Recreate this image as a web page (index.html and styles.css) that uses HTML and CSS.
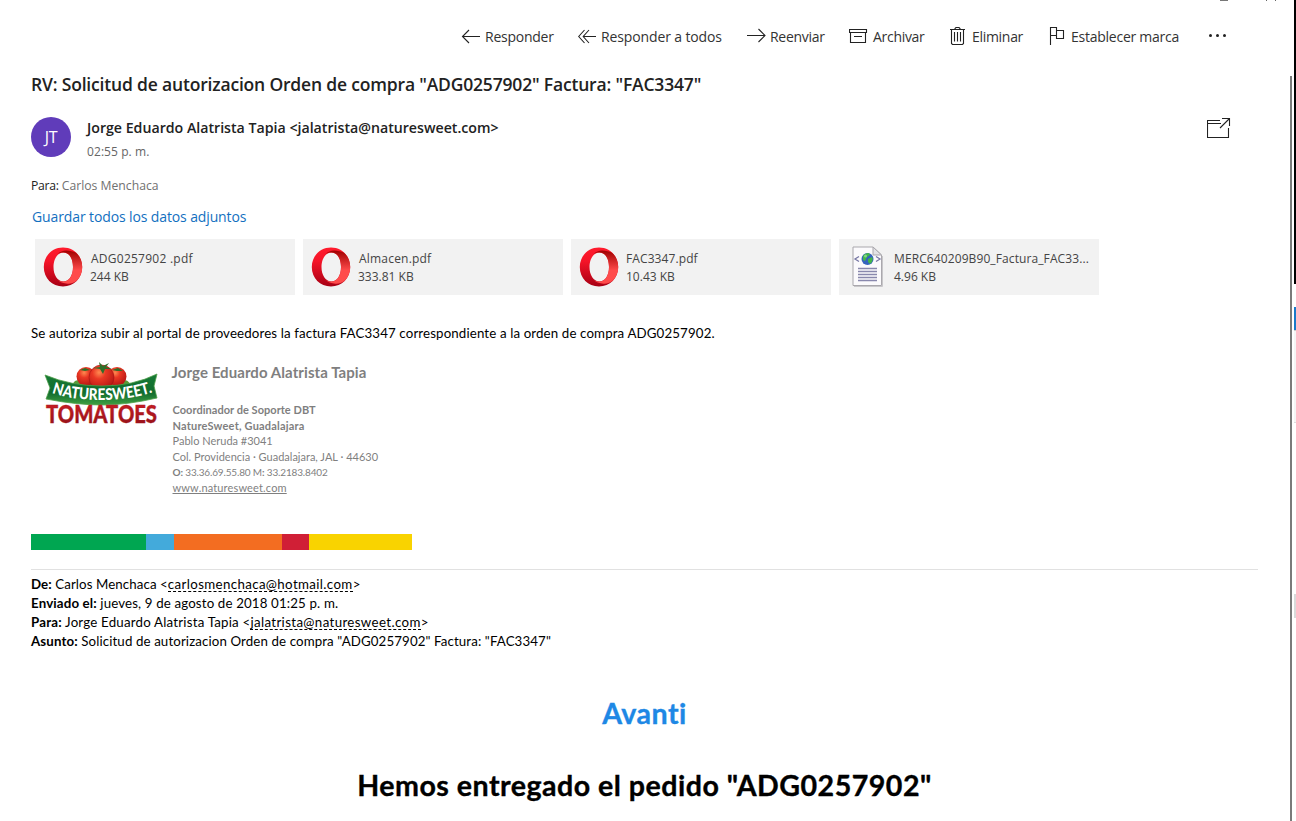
FILE: index.html
```html
<!DOCTYPE html>
<html lang="es">
<head>
<meta charset="utf-8">
<title>Correo</title>
<link rel="stylesheet" href="styles.css">
</head>
<body>
<svg class="defs" width="0" height="0">
  <defs>
    <linearGradient id="ringOuter" x1="0" y1="0" x2="0" y2="1"><stop offset="0" stop-color="#ff1b2d"/><stop offset=".35" stop-color="#f51428"/><stop offset="1" stop-color="#a70014"/></linearGradient>
    <linearGradient id="ringInner" x1="0" y1="0" x2="0" y2="1"><stop offset="0" stop-color="#a00000"/><stop offset=".6" stop-color="#ff4b4b"/><stop offset="1" stop-color="#ff4b4b"/></linearGradient>
    <symbol id="opera" viewBox="0 0 40 40">
      <path fill="url(#ringOuter)" fill-rule="evenodd" d="M20 .5C9 .5.8 9 .8 20S9 39.5 20 39.5 39.2 31 39.2 20 31 .5 20 .5ZM20.500 5.500C26.500 5.500 30 12 30 20s-3.500 14.500-9.500 14.500S10.500 28 10.500 20 14.500 5.500 20.500 5.500Z"/>
      <path fill="url(#ringInner)" d="M14 7.500C17 4.500 20 3.500 23 3.500c4 0 7 1 10 2.200 4 3.500 6.200 8.500 6.200 14.300s-2.200 10.800-6.200 14.300c-3 2.200-6 2.700-10 2.200-3.500-.5-6.500-1.500-9-4 2 1.500 4 2 6.500 2C26.500 34.500 30 28 30 20S26.500 5.500 20.500 5.500c-2.500 0-4.500.6-6.500 2Z"/>
    </symbol>
  </defs>
</svg>
<div class="app">
  <main class="mail">
    <div class="window-buttons"><i class="wb-a"></i><i class="wb-b"></i><i class="wb-b"></i></div>
    <nav class="toolbar">
      <a class="tool"><svg width="24" height="20" viewBox="0 0 24 20"><path d="M1.500 10.500H19M8 4 1.500 10.500 8 17"/></svg><span class="t-reply">Responder</span></a>
      <a class="tool"><svg width="23" height="20" viewBox="0 0 23 20"><path d="M6 10.500H18M6.500 4 .7 10.500 6.500 17M11 4 5.200 10.500 11 17"/></svg><span class="t-all">Responder a todos</span></a>
      <a class="tool"><svg width="23" height="20" viewBox="0 0 23 20"><path d="M0 9.500H18M11.500 3 18 9.500 11.500 16"/></svg><span class="t-fwd">Reenviar</span></a>
      <a class="tool"><svg width="24" height="20" viewBox="0 0 24 20"><path d="M.5 3.500H17.500V6.500H.5ZM1.500 6.500V16.500H16.500V6.500M5 10.500H13"/></svg><span class="t-arch">Archivar</span></a>
      <a class="tool"><svg width="22" height="20" viewBox="0 0 22 20"><path d="M0 3.500H15M5 3.500V2.500L6 1.500H9L10 2.500V3.500M1.500 3.500V17.500L2.500 18.500H12.500L13.500 17.500V3.500M4.500 6V15.500M7.500 6V15.500M10.500 6V15.500"/></svg><span class="t-del">Eliminar</span></a>
      <a class="tool"><svg width="22" height="20" viewBox="0 0 22 20"><path d="M1.500 19V1.500H7.500V9.500H1.500M7.500 4.500H14.500V12.500H7.500V9.500"/></svg><span class="t-flag">Establecer marca</span></a>
      <a class="tool"><svg width="20" height="20" viewBox="0 0 20 20"><g class="dots"><circle cx="2.500" cy="9.500" r="1.500"/><circle cx="9.500" cy="9.500" r="1.500"/><circle cx="16.500" cy="9.500" r="1.500"/></g></svg></a>
    </nav>
    <h1 class="subject"><span>RV: Solicitud de autorizacion Orden de compra "ADG0257902" Factura: "FAC3347"</span></h1>
    <header class="sender">
      <div class="avatar">JT</div>
      <div class="who">
        <div class="name">Jorge Eduardo Alatrista Tapia &lt;jalatrista@naturesweet.com&gt;</div>
        <div class="time">02:55 p. m.</div>
      </div>
      <svg class="popout" width="24" height="20" viewBox="0 0 24 20"><path d="M13 2.500H.5V19.500H21.500V10M.5 5.500H14M15 .5H22.500V8M13 10 22 1"/></svg>
    </header>
    <div class="to"><b>Para:</b> Carlos Menchaca</div>
    <a class="save-all">Guardar todos los datos adjuntos</a>
    <div class="files">
      <div class="file"><svg class="ring" width="40" height="40"><use href="#opera"/></svg><div class="meta"><div class="f1">ADG0257902 .pdf</div><div>244 KB</div></div></div>
      <div class="file"><svg class="ring" width="40" height="40"><use href="#opera"/></svg><div class="meta"><div class="f2">Almacen.pdf</div><div>333.81 KB</div></div></div>
      <div class="file"><svg class="ring" width="40" height="40"><use href="#opera"/></svg><div class="meta"><div class="f3">FAC3347.pdf</div><div>10.43 KB</div></div></div>
      <div class="file xml">
        <svg class="doc" width="32" height="42" viewBox="0 0 32 42">
          <path d="M1 1H21L29.500 9V39.500H1Z" fill="#fbfafc" stroke="#aaa8ad"/><path d="M2 40.500H30.500V10" fill="none" stroke="#c8c7ca"/>
          <path d="M21 1V9H29.500Z" fill="#e2e2e6" stroke="#aaa8ad"/>
          <circle cx="15.500" cy="13" r="6" fill="#3563bd"/><path d="M11 10Q13 7 17 7L18 9 15 11 13 15 11 14ZM16 13 20 11Q22 15 18 18L16 16Z" fill="#43b649"/><circle cx="13.500" cy="10" r="1.500" fill="#9de6a0" opacity=".7"/>
          <path d="M7 10.500 3 13 7 15.500M24 10.500 28 13 24 15.500" fill="none" stroke="#7777a4" stroke-width="1.300"/>
          <path d="M6 22.500H25M6 25.500H25M6 28.500H25M6 31.500H25M6 34.500H25" stroke="#8988ad" stroke-width="1.300"/>
        </svg>
        <div class="meta"><div class="f4">MERC640209B90_Factura_FAC33...</div><div>4.96 KB</div></div>
      </div>
    </div>
    <p class="message"><span>Se autoriza subir al portal de proveedores la factura FAC3347 correspondiente a la orden de compra ADG0257902.</span></p>
    <section class="signature">
      <svg class="logo" width="116" height="66" viewBox="0 0 116 66">
        <defs>
          <radialGradient id="tom" cx=".4" cy=".3" r=".75"><stop offset="0" stop-color="#ff8a50"/><stop offset=".35" stop-color="#ea3824"/><stop offset="1" stop-color="#b01312"/></radialGradient>
          <linearGradient id="banner" x1="0" y1="0" x2="0" y2="1"><stop offset="0" stop-color="#157a35"/><stop offset=".6" stop-color="#126c2e"/><stop offset="1" stop-color="#3fa043"/></linearGradient>
          <linearGradient id="red" x1="0" y1="0" x2="0" y2="1"><stop offset="0" stop-color="#d51f27"/><stop offset="1" stop-color="#8d1018"/></linearGradient>
          <path id="arc" d="M8 31Q28 38 57 38T111 29.500"/>
        </defs>
        <path d="M28 25Q30 15 38 20L78 20Q84 15 87 25Z" fill="#5b9b36"/>
        <circle cx="42" cy="14.500" r="9.500" fill="url(#tom)"/><circle cx="73" cy="14.500" r="9.500" fill="url(#tom)"/><circle cx="57.500" cy="15.500" r="12.500" fill="url(#tom)" stroke="#a51212" stroke-width=".6"/>
        <path d="M36 8 41 6 46 8 41 9ZM68 8 74 6 79 9 73 9ZM49 6 56 5 55 0 59 4 65 1 62 5 68 7 61 7 59 12 56 7Z" fill="#2f6e29"/>
        <path d="M1 13Q27 24 58 24T113 12L110 24 113 36Q83 43 58 43T2 37L6 26Z" fill="url(#banner)" stroke="#4f9e49" stroke-width=".8"/>
        <text class="brand"><textPath href="#arc" textLength="102" lengthAdjust="spacingAndGlyphs">NATURESWEET.</textPath></text>
        <text class="tomatoes" x="2" y="61" textLength="111" lengthAdjust="spacingAndGlyphs">TOMATOES</text>
      </svg>
      <div class="card">
        <div class="card-name">Jorge Eduardo Alatrista Tapia</div>
        <div class="strong l1">Coordinador de Soporte DBT</div>
        <div class="strong l2">NatureSweet, Guadalajara</div>
        <div class="l3">Pablo Neruda #3041</div>
        <div class="l4">Col. Providencia · Guadalajara, JAL · 44630</div>
        <div class="l5"><b>O:</b> 33.36.69.55.80 M<b>:</b> 33.2183.8402</div>
        <div class="l6"><u>www.naturesweet.com</u></div>
      </div>
    </section>
    <div class="stripe"><i class="s1"></i><i class="s2"></i><i class="s3"></i><i class="s4"></i><i class="s5"></i></div>
    <section class="quoted">
      <div class="q1"><b>De:</b> Carlos Menchaca &lt;<span class="addr">carlosmenchaca@hotmail.com</span>&gt;</div>
      <div class="q2"><b>Enviado el:</b> jueves, 9 de agosto de 2018 01:25 p. m.</div>
      <div class="q3"><b>Para:</b> Jorge Eduardo Alatrista Tapia &lt;<span class="addr">jalatrista@naturesweet.com</span>&gt;</div>
      <div class="q4"><b>Asunto:</b> Solicitud de autorizacion Orden de compra "ADG0257902" Factura: "FAC3347"</div>
    </section>
    <h2 class="avanti">Avanti</h2>
    <h2 class="delivered">Hemos entregado el pedido "ADG0257902"</h2>
  </main>
  <div class="scroll"></div>
  <aside class="edge"><i class="e1"></i><i class="e2"></i><i class="e3"></i><i class="e4"></i></aside>
</div>
</body>
</html>
```

FILE: styles.css
```css
* { box-sizing: border-box; }
body { margin: 0; background: #fff; overflow: hidden; font-family: "Open Sans", "Noto Sans", sans-serif; color: #222; }
i { display: block; }
.defs { position: absolute; }
.app { display: flex; width: 1296px; height: 821px; overflow: hidden; white-space: nowrap; }
.mail { width: 1290px; flex: none; padding-left: 31px; }
.scroll { width: 2px; margin-top: 76px; background: #7a7a7a; }
.edge { width: 2px; margin-left: 2px; }
.e1 { height: 284px; background: #000; }
.e2 { height: 23px; margin-top: 23px; background: #1979ca; }
.e3 { height: 93px; background: #f5f5f5; border-top: 1px solid #ccc; border-bottom: 1px solid #ddd; }
.e4 { height: 24px; margin-top: 171px; background: #dadada; }

.window-buttons { height: 1px; padding-left: 1189px; display: flex; }
.wb-a { width: 8px; background: #777; margin-right: 38px; }
.wb-b { width: 1px; background: #666; margin-right: 8px; }
.toolbar { height: 66px; margin-left: 430px; padding-top: 25px; display: grid; grid-template-columns: 117px 169px 102px 101px 99px 159px 30px; align-items: start; }
.tool { display: flex; height: 22px; line-height: 22px; font-size: 14px; color: #333; }
.tool svg, .popout { flex: none; fill: none; stroke: #222; stroke-width: 1.1; }
.tool .dots { fill: #222; stroke: none; }
.t-reply { letter-spacing: -.25px; }
.t-all { letter-spacing: -.13px; }
.t-fwd, .t-arch, .t-del { letter-spacing: -.3px; }
.t-flag { letter-spacing: -.25px; }

.subject { margin: 0; height: 50px; padding-top: 5px; font-size: 17.500px; font-weight: 600; line-height: 25px; letter-spacing: -.18px; }
.sender { display: flex; height: 60px; }
.avatar { width: 40px; height: 40px; border-radius: 50%; background: #603cba; color: #fff; font-size: 16px; line-height: 41px; text-align: center; letter-spacing: -.2px; }
.who { width: 1136px; padding-left: 16px; }
.name { font-size: 14.200px; font-weight: 600; line-height: 22px; letter-spacing: -.01px; }
.time { font-size: 12px; line-height: 25px; color: #666; letter-spacing: .08px; }
.popout { margin-top: 1px; }
.to { height: 28px; font-size: 12.200px; line-height: 17px; color: #717171; }
.to b { font-weight: 400; color: #222; letter-spacing: -.3px; }
.save-all { display: block; height: 34px; padding-left: 1px; font-size: 14px; line-height: 24px; color: #1270bf; letter-spacing: -.12px; }
.files { display: flex; gap: 8px; padding-left: 4px; height: 56px; }
.file { width: 260px; background: #f2f2f2; display: flex; padding: 8px 0 0 8px; font-size: 12px; line-height: 18px; color: #444; }
.ring { flex: none; }
.meta { padding: 3px 0 0 7px; }
.f1 { padding-left: 1px; letter-spacing: .25px; }
.f2 { padding-left: 1px; letter-spacing: .2px; }
.f3, .f4 { letter-spacing: .1px; }
.xml { padding-left: 13px; }
.doc { flex: none; margin-top: -1px; }
.xml .meta { padding-left: 10px; }

.message, .signature, .quoted, .avanti, .delivered { font-family: Lato, "Open Sans", sans-serif; font-variant-ligatures: none; }
.message { margin: 0; height: 67px; padding-top: 28px; font-size: 13.300px; line-height: 20px; color: #000; letter-spacing: .125px; }
.signature { height: 172px; display: flex; padding-left: 13px; }
.card { padding: 0 0 0 12.500px; color: #7f7f7f; font-size: 11px; line-height: 15.600px; }
.logo { flex: none; overflow: visible; }
.card-name { margin-left: -1px; height: 40px; font-weight: 700; font-size: 15px; line-height: 20px; letter-spacing: .07px; }
.strong { font-weight: 700; }
.l1 { letter-spacing: .04px; }
.l2 { letter-spacing: .2px; }
.l5 { font-size: 10px; letter-spacing: -.16px; line-height: 16px; }
.l6 { letter-spacing: .15px; line-height: 15px; }
.brand { font: 900 16px Lato, sans-serif; fill: #fff; }
.tomatoes { font: 900 25px Lato, sans-serif; fill: url(#red); stroke: #a71820; stroke-width: .4; }
.stripe { width: 381px; height: 16px; display: flex; }
.s1 { width: 115px; background: #00a651; } .s2 { width: 28px; background: #43aadb; } .s3 { width: 108px; background: #f36d21; } .s4 { width: 27px; background: #d01f36; } .s5 { width: 103px; background: #f9d300; }
.quoted { width: 1227px; height: 126px; margin-top: 19px; padding-top: 5px; border-top: 1px solid #e1e1e1; font-size: 13.300px; line-height: 19px; color: #000; letter-spacing: .11px; }
.q1 { letter-spacing: .08px; }
.q2 { letter-spacing: .14px; }
.q3 { letter-spacing: .2px; }
.addr { border-bottom: 1px dashed #000; display: inline-block; line-height: 14px; letter-spacing: .36px; }
.avanti, .delivered { width: 1227px; margin: 0; text-align: center; font-size: 28.600px; line-height: 36px; font-weight: 700; color: #000; letter-spacing: .47px; -webkit-text-stroke: .35px currentColor; }
.avanti { height: 72px; color: #1e88e5; }
```
